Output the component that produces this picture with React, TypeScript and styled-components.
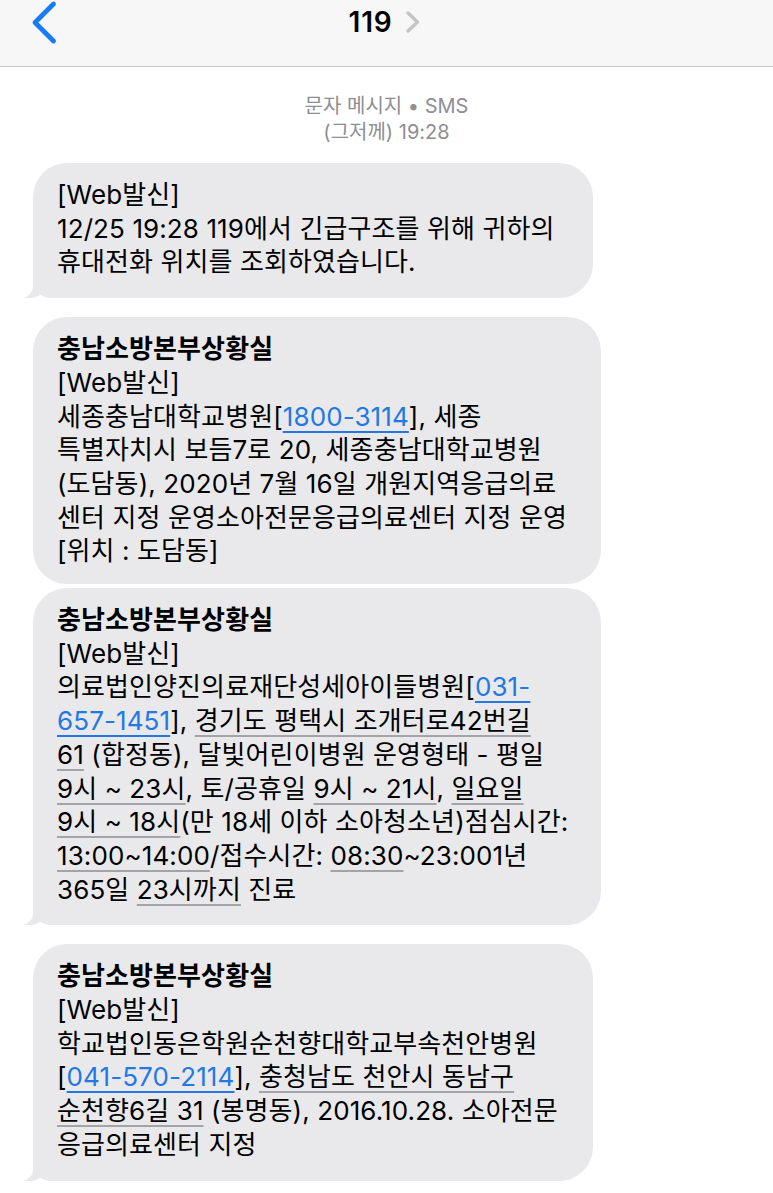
import React from "react";
import styled, { createGlobalStyle } from "styled-components";

const GlobalStyle = createGlobalStyle`
  html, body { margin: 0; padding: 0; background: #ffffff; }
  body {
    font-family: Inter, "Noto Sans CJK KR", "Noto Sans", sans-serif;
    -webkit-font-smoothing: antialiased;
  }
  * { box-sizing: border-box; }
`;

const Page = styled.div`
  width: 773px;
  min-height: 1193px;
  background: #ffffff;
  overflow: hidden;
`;

const Header = styled.header`
  height: 67px;
  display: grid;
  grid-template-columns: 1fr auto 1fr;
  align-items: start;
  background: #f7f7f7;
  border-bottom: 1px solid #c9c9cc;
`;

const BackButton = styled.div`
  padding: 0 0 0 30px;
  display: flex;
  color: #1a7cf5;
`;

const TitleWrap = styled.div`
  display: flex;
  align-items: center;
  gap: 12px;
  padding-top: 4px;
  margin-right: 4px;
`;

const Title = styled.span`
  font-size: 28px;
  font-weight: 600;
  letter-spacing: 0.8px;
  color: #000;
  line-height: 36px;
`;

const Meta = styled.div`
  margin-top: 26px;
  text-align: center;
  font-size: 20px;
  line-height: 26px;
  color: #8e8e93;
`;

const Thread = styled.div`
  display: flex;
  flex-direction: column;
  align-items: flex-start;
  gap: 4px;
  padding: 18px 0 0 33px;
`;

const Bubble = styled.div<{ $width: number; $tail?: boolean }>`
  position: relative;
  width: ${(p) => p.$width}px;
  background: #e9e9eb;
  border-radius: 34px;
  border-bottom-left-radius: ${(p) => (p.$tail ? 18 : 34)}px;
  padding: 15px 16px ${(p) => (p.$tail ? 19 : 16)}px 24px;
  margin-bottom: ${(p) => (p.$tail ? 15 : 0)}px;
  color: #000;
  font-size: 26px;
  line-height: 33.7px;
  letter-spacing: 0.1px;

  ${(p) =>
    p.$tail &&
    `
    &::before {
      content: "";
      position: absolute;
      left: -10px;
      bottom: 0;
      width: 23px;
      height: 25px;
      background: #e9e9eb;
      border-bottom-right-radius: 16px 14px;
    }
    &::after {
      content: "";
      position: absolute;
      left: -26px;
      bottom: 0;
      width: 26px;
      height: 26px;
      background: #ffffff;
      border-bottom-right-radius: 12px 12px;
    }
  `}
`;

const Line = styled.div`
  position: relative;
  z-index: 1;
  white-space: nowrap;
`;

const Sender = styled(Line)`
  font-weight: 700;
`;

const Link = styled.span`
  color: #2278e4;
  text-decoration: underline;
  text-decoration-color: #2278e4;
  text-decoration-thickness: 2px;
  text-underline-offset: 5px;
`;

const Data = styled.span`
  text-decoration: underline;
  text-decoration-color: #a3a3a8;
  text-decoration-thickness: 2px;
  text-underline-offset: 5px;
`;

const BackChevron = () => (
  <svg width="28" height="46" viewBox="0 0 28 46" fill="none">
    <path
      d="M23.5 4 L5 22.5 L23.5 41"
      stroke="currentColor"
      strokeWidth="4.8"
      strokeLinecap="round"
      strokeLinejoin="round"
    />
  </svg>
);

const SmallChevron = () => (
  <svg width="16" height="24" viewBox="0 0 16 24" fill="none">
    <path
      d="M3 3 L12.5 12 L3 21"
      stroke="#c4c4c7"
      strokeWidth="3.4"
      strokeLinecap="round"
      strokeLinejoin="round"
    />
  </svg>
);

export default function App() {
  return (
    <Page>
      <GlobalStyle />
      <Header>
        <BackButton>
          <BackChevron />
        </BackButton>
        <TitleWrap>
          <Title>119</Title>
          <SmallChevron />
        </TitleWrap>
        <div />
      </Header>

      <Meta>
        <div>문자 메시지 • SMS</div>
        <div>(그저께) 19:28</div>
      </Meta>

      <Thread>
        <Bubble $width={560} $tail>
          <Line>[Web발신]</Line>
          <Line>12/25 19:28 119에서 긴급구조를 위해 귀하의</Line>
          <Line>휴대전화 위치를 조회하였습니다.</Line>
        </Bubble>

        <Bubble $width={568}>
          <Sender>충남소방본부상황실</Sender>
          <Line>[Web발신]</Line>
          <Line>
            세종충남대학교병원[<Link>1800-3114</Link>], 세종
          </Line>
          <Line>특별자치시 보듬7로 20, 세종충남대학교병원</Line>
          <Line>(도담동), 2020년 7월 16일 개원지역응급의료</Line>
          <Line>센터 지정 운영소아전문응급의료센터 지정 운영</Line>
          <Line>[위치 : 도담동]</Line>
        </Bubble>

        <Bubble $width={568} $tail>
          <Sender>충남소방본부상황실</Sender>
          <Line>[Web발신]</Line>
          <Line>
            의료법인양진의료재단성세아이들병원[<Link>031-</Link>
          </Line>
          <Line>
            <Link>657-1451</Link>], <Data>경기도 평택시 조개터로42번길</Data>
          </Line>
          <Line>
            <Data>61</Data> (합정동), 달빛어린이병원 운영형태 - 평일
          </Line>
          <Line>
            <Data>9시 ~ 23시</Data>, 토/공휴일 <Data>9시 ~ 21시</Data>,{" "}
            <Data>일요일</Data>
          </Line>
          <Line>
            <Data>9시 ~ 18시</Data>(만 18세 이하 소아청소년)점심시간:
          </Line>
          <Line>
            <Data>13:00~14:00</Data>/접수시간: <Data>08:30</Data>~23:001년
          </Line>
          <Line>
            365일 <Data>23시까지</Data> 진료
          </Line>
        </Bubble>

        <Bubble $width={560} $tail>
          <Sender>충남소방본부상황실</Sender>
          <Line>[Web발신]</Line>
          <Line>학교법인동은학원순천향대학교부속천안병원</Line>
          <Line>
            [<Link>041-570-2114</Link>], <Data>충청남도 천안시 동남구</Data>
          </Line>
          <Line>
            <Data>순천향6길 31</Data> (봉명동), 2016.10.28. 소아전문
          </Line>
          <Line>응급의료센터 지정</Line>
        </Bubble>
      </Thread>
    </Page>
  );
}
